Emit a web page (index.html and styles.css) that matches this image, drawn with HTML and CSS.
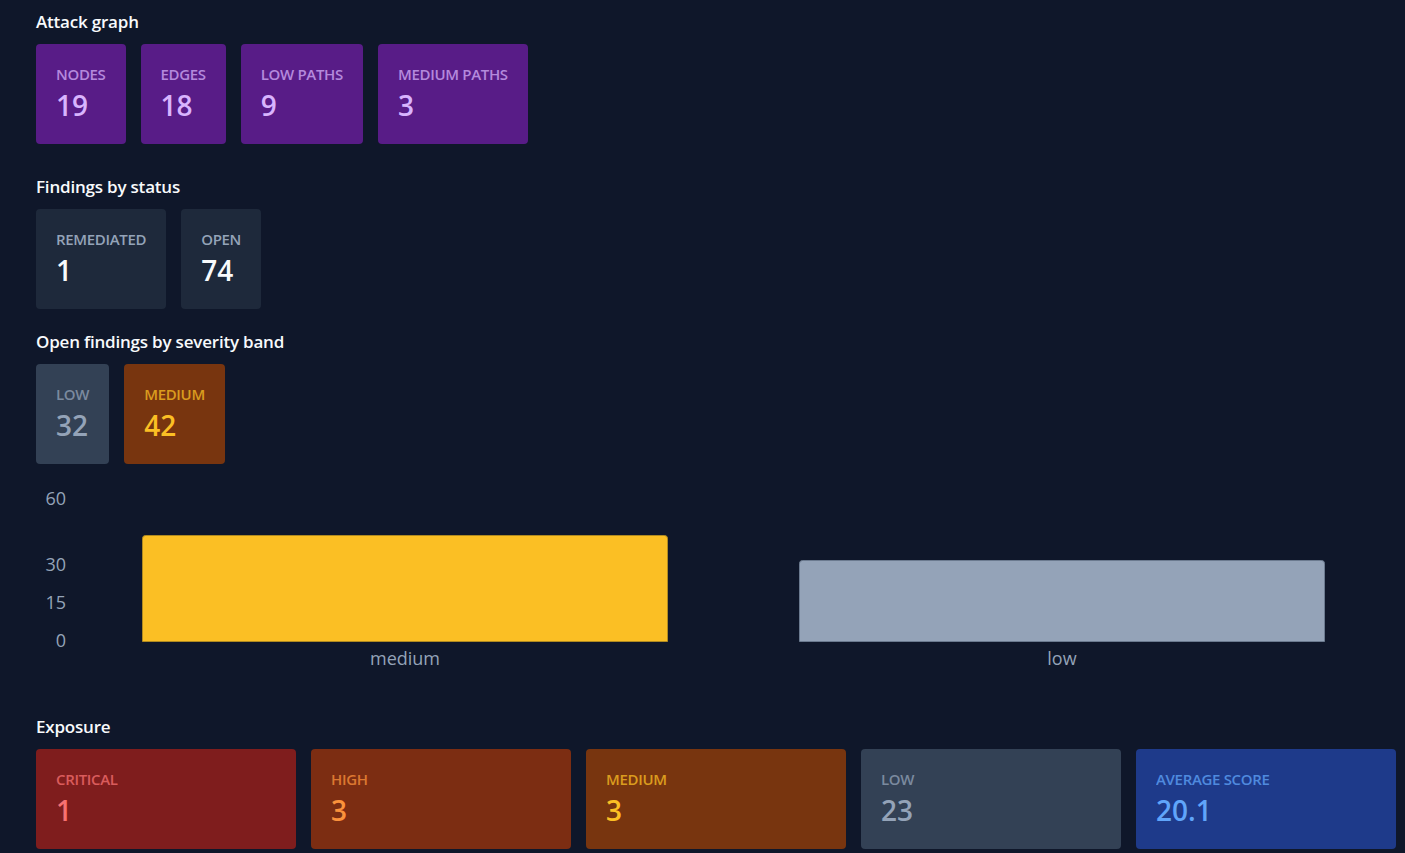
FILE: index.html
```html
<!DOCTYPE html>
<html lang="en">
<head>
<meta charset="utf-8">
<title>Attack graph</title>
<link rel="stylesheet" href="styles.css">
</head>
<body>
<main class="page">
  <section class="section first">
    <h2 class="section-title">Attack graph</h2>
    <div class="cards">
      <div class="card purple"><div class="card-label">NODES</div><div class="card-value">19</div></div>
      <div class="card purple"><div class="card-label">EDGES</div><div class="card-value">18</div></div>
      <div class="card purple"><div class="card-label">LOW PATHS</div><div class="card-value">9</div></div>
      <div class="card purple"><div class="card-label">MEDIUM PATHS</div><div class="card-value">3</div></div>
    </div>
  </section>

  <section class="section second">
    <h2 class="section-title">Findings by status</h2>
    <div class="cards">
      <div class="card slate"><div class="card-label">REMEDIATED</div><div class="card-value">1</div></div>
      <div class="card slate"><div class="card-label">OPEN</div><div class="card-value">74</div></div>
    </div>
  </section>

  <section class="section">
    <h2 class="section-title">Open findings by severity band</h2>
    <div class="cards">
      <div class="card low"><div class="card-label">LOW</div><div class="card-value">32</div></div>
      <div class="card medium"><div class="card-label">MEDIUM</div><div class="card-value">42</div></div>
    </div>
    <div class="chart">
      <svg class="chart-svg" width="1360" height="232" viewBox="0 0 1360 232">
        <g class="ticks">
          <text x="30" y="31" text-anchor="end">60</text>
          <text x="30" y="97" text-anchor="end">30</text>
          <text x="30" y="135" text-anchor="end">15</text>
          <text x="30" y="173" text-anchor="end">0</text>
        </g>
        <path class="bar-medium" d="M106.5 167.5 V64.5 Q106.5 61.5 109.5 61.5 H628.5 Q631.5 61.5 631.5 64.5 V167.5 Z"/>
        <path class="bar-low" d="M763.5 167.5 V89.5 Q763.5 86.5 766.5 86.5 H1285.5 Q1288.5 86.5 1288.5 89.5 V167.5 Z"/>
        <g class="xlabels">
          <text x="369" y="191" text-anchor="middle">medium</text>
          <text x="1026" y="191" text-anchor="middle">low</text>
        </g>
      </svg>
    </div>
  </section>

  <section class="section">
    <h2 class="section-title">Exposure</h2>
    <div class="cards grid5">
      <div class="card critical"><div class="card-label">CRITICAL</div><div class="card-value">1</div></div>
      <div class="card high"><div class="card-label">HIGH</div><div class="card-value">3</div></div>
      <div class="card medium"><div class="card-label">MEDIUM</div><div class="card-value">3</div></div>
      <div class="card low"><div class="card-label">LOW</div><div class="card-value">23</div></div>
      <div class="card blue"><div class="card-label">AVERAGE SCORE</div><div class="card-value">20.1</div></div>
    </div>
  </section>
</main>
</body>
</html>
```

FILE: styles.css
```css
* { box-sizing: border-box; }

html, body {
  margin: 0;
  padding: 0;
  background: #0f172a;
  overflow: hidden;
}

body {
  font-family: "Open Sans", "Noto Sans", "Liberation Sans", sans-serif;
  color: #f1f5f9;
}

.page {
  width: 1396px;
  padding: 10px 0 0 36px;
}

.section {
  margin-bottom: 32px;
}

.section.first {
  margin-bottom: 31px;
}

.section.second {
  margin-bottom: 21px;
}

.section-title {
  margin: 0 0 10px 0;
  font-size: 17px;
  line-height: 24px;
  font-weight: 600;
  color: #f8fafc;
  letter-spacing: -0.2px;
}

.cards {
  display: flex;
  gap: 15px;
}

.grid5 {
  display: grid;
  grid-template-columns: repeat(5, 1fr);
  width: 1360px;
}

.card {
  height: 100px;
  padding: 20px 20px 0 20px;
  border-radius: 4px;
}

.card-label {
  font-size: 15px;
  line-height: 20px;
  font-weight: 600;
  letter-spacing: -0.33px;
  white-space: nowrap;
}

.card-value {
  margin-top: 4px;
  font-size: 28px;
  line-height: 34px;
  font-weight: 600;
}

.purple { background: #581c87; }
.purple .card-label { color: #d8b4fe; opacity: 0.72; }
.purple .card-value { color: #d8b4fe; }

.slate { background: #1e293b; }
.slate .card-label { color: #94a3b8; }
.slate .card-value { color: #f8fafc; }

.low { background: #334155; }
.low .card-label { color: #94a3b8; opacity: 0.75; }
.low .card-value { color: #94a3b8; }

.medium { background: #78350f; }
.medium .card-label { color: #fbbf24; opacity: 0.75; }
.medium .card-value { color: #fbbf24; }

.critical { background: #7f1d1d; }
.critical .card-label { color: #f87171; opacity: 0.75; }
.critical .card-value { color: #f87171; }

.high { background: #7c2d12; }
.high .card-label { color: #fb923c; opacity: 0.75; }
.high .card-value { color: #fb923c; }

.blue { background: #1e3a8a; }
.blue .card-label { color: #60a5fa; opacity: 0.75; }
.blue .card-value { color: #60a5fa; }

.chart {
  margin-top: 10px;
  margin-bottom: -23px;
  height: 232px;
}

.chart-svg {
  display: block;
}

.ticks text,
.xlabels text {
  font-family: "Open Sans", "Noto Sans", sans-serif;
  font-size: 18px;
  fill: #94a3b8;
}

.bar-medium {
  fill: #fbbf24;
  stroke: #b08a20;
  stroke-width: 1;
}

.bar-low {
  fill: #94a3b8;
  stroke: #6b7a8f;
  stroke-width: 1;
}
```
